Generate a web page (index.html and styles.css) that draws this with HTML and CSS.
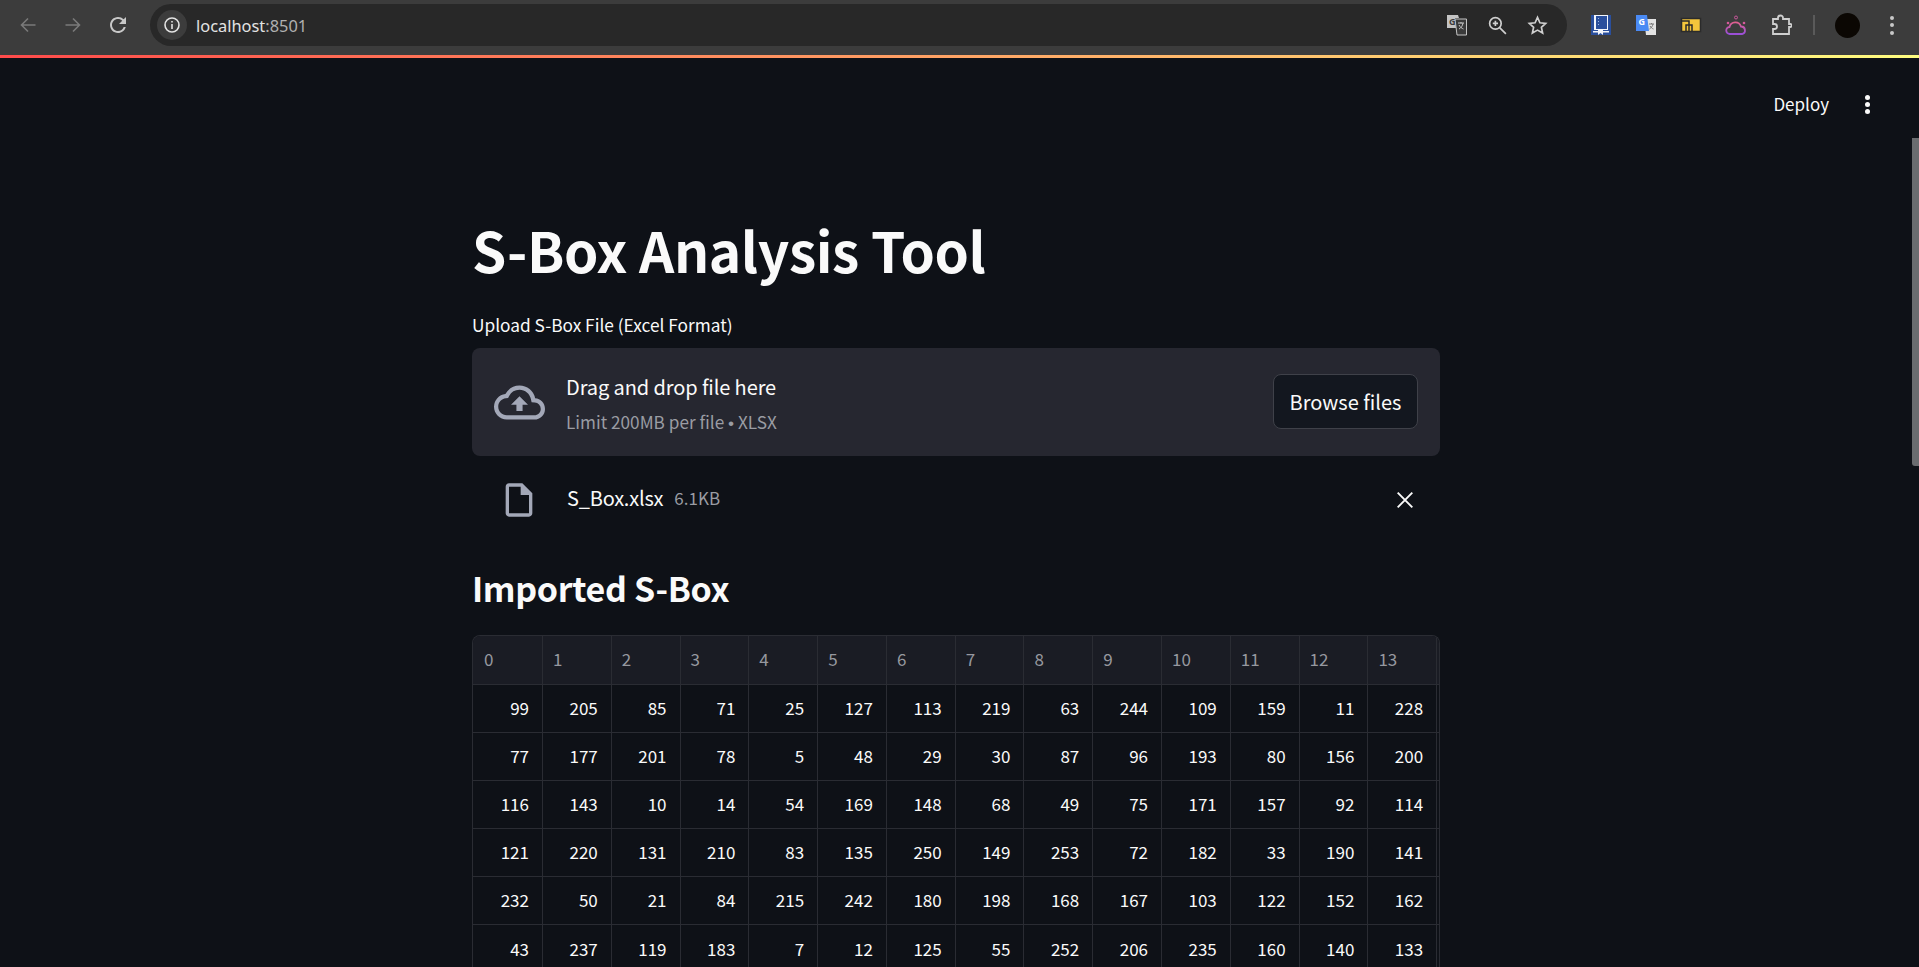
FILE: index.html
```html
<!DOCTYPE html>
<html>
<head>
    <meta charset="utf-8">
    <title>S-Box Analysis Tool</title>
    <link rel="stylesheet" href="styles.css">
</head>
<body>
    <div class="chrome">
        <div class="nav">
            <svg class="nav-icon dim" viewBox="0 0 18 18"><path d="M16.500 9H2.500M9 2.500 2.500 9 9 15.500"/></svg>
            <svg class="nav-icon dim" viewBox="0 0 18 18"><path d="M1.500 9h14M9 2.500 15.500 9 9 15.500"/></svg>
            <svg class="nav-icon solid-icon" viewBox="3 3 18 18"><path d="M17.650 6.350A7.958 7.958 0 0 0 12 4c-4.420 0-7.990 3.580-7.990 8s3.570 8 7.990 8c3.730 0 6.840-2.550 7.730-6h-2.080A5.990 5.990 0 0 1 12 18c-3.310 0-6-2.690-6-6s2.690-6 6-6c1.660 0 3.140.69 4.220 1.780L13 11h7V4l-2.350 2.350z"/></svg>
        </div>
        <div class="omnibox">
            <span class="info-wrap">
                <svg class="info" viewBox="0 0 18 18"><circle cx="9" cy="9" r="7"/><path d="M9 8v5"/><path d="M9 5v1.600"/></svg>
            </span>
            <span class="url">localhost<span class="port">:8501</span></span>
            <span class="omni-right">
                <svg class="omni-icon" viewBox="0 0 22 22"><path class="solid" d="M1 1h11l1 3h-4l1 10H1z"/><path class="sheet" d="M9 5h11.500v16H11z"/><text x="3" y="10.500" class="g">G</text><path class="mark" d="M12 9h6M15 8v1.500M17 9c-.5 3-2 5-4 6M13 11c1 2 3 3.500 4.500 4"/></svg>
                <svg class="omni-icon line" viewBox="0 0 20 20"><circle cx="8" cy="8" r="5.500"/><path d="M12 12l6 6M8 5.500v5M5.500 8h5"/></svg>
                <svg class="omni-icon line" viewBox="0 0 20 20"><path d="M10 2.300l2.300 5.100 5.500.6-4.100 3.700 1.200 5.500L10 14.400l-4.900 2.800 1.200-5.500L2.200 8l5.500-.6z"/></svg>
            </span>
        </div>
        <div class="extensions">
            <svg class="ext" viewBox="0 0 22 22"><path fill="#2a4f9c" d="M1 1h20v20H1z"/><path fill="#f3f6fb" d="M4 1h14v15H4z"/><path fill="#2a4f9c" d="M6 2h11v13H6z"/><path fill="#9db9e6" d="M8 4h1v1H8zM8 7h1v1H8zM8 10h1v1H8z"/><path fill="#f3f6fb" d="M3 17h16v1.500H3zM8 16h5v5l-2.500-2L8 21z"/></svg>
            <svg class="ext" viewBox="0 0 22 22"><path fill="#e3e3e3" d="M9 5h12v16H11z"/><path fill="#4a8af4" d="M1 1h11l2 16H1z"/><text x="3.500" y="11" class="g light">G</text><path fill="none" stroke="#777" stroke-width="1" d="M14 10h5M16.500 9v1M18 10c-.5 2.500-2 4-3.500 5M15 12c1 1.500 2 2.500 3.500 3"/></svg>
            <svg class="ext" viewBox="0 0 22 22"><path fill="#f5c63c" stroke="#2b2b2b" stroke-width="1.500" d="M1.500 4.500h19v13h-19z"/><path fill="none" stroke="#2b2b2b" stroke-width="1.500" d="M2 7h7v10M12 17v-6h-6v6"/></svg>
            <svg class="ext" viewBox="0 0 22 22"><defs><linearGradient id="cloud-grad" x1="0" y1="0" x2="0" y2="1"><stop offset="0" stop-color="#e0608f"/><stop offset="1" stop-color="#9a4fd8"/></linearGradient></defs><path fill="none" stroke="url(#cloud-grad)" stroke-width="1.800" d="M5 20a3.500 3.500 0 0 1-.5-7 6 6 0 0 1 11.500-.5 3.800 3.800 0 0 1 1 7.500z"/><circle cx="11" cy="3.500" r="1.500" fill="none" stroke="#c8579b"/><circle cx="3" cy="9" r="1.300" fill="#d65a9b"/><circle cx="19" cy="9" r="1.300" fill="#d65a9b"/></svg>
            <svg class="ext puzzle" viewBox="0 0 22 22"><path d="M3 5h5V4a2.500 2.500 0 0 1 5 0v1h6v5h1.200a1.500 1.500 0 0 1 0 3H19v7H3v-5h1.500a2.500 2.500 0 0 0 0-5H3z"/></svg>
            <span class="divider"></span>
            <span class="avatar"></span>
            <span class="chrome-dots"><i></i><i></i><i></i></span>
        </div>
    </div>
    <div class="decoration"></div>

    <div class="app">
        <div class="toolbar">
            <span class="deploy">Deploy</span>
            <span class="app-dots"><i></i><i></i><i></i></span>
        </div>

        <div class="main">
            <h1>S-Box Analysis Tool</h1>
            <div class="upload-label">Upload S-Box File (Excel Format)</div>

            <div class="dropzone">
                <svg class="cloud" viewBox="0 0 24 24"><path d="M19.35 10.040A7.490 7.490 0 0 0 12 4C9.110 4 6.600 5.640 5.350 8.040A5.994 5.994 0 0 0 0 14c0 3.310 2.690 6 6 6h13c2.760 0 5-2.240 5-5 0-2.640-2.050-4.780-4.650-4.960zM19 18H6c-2.210 0-4-1.790-4-4 0-2.050 1.530-3.760 3.560-3.970l1.070-.11.500-.95A5.469 5.469 0 0 1 12 6c2.620 0 4.880 1.860 5.390 4.430l.3 1.500 1.530.11A2.980 2.980 0 0 1 22 15c0 1.650-1.350 3-3 3zM8 13h2.550v3h2.900v-3H16l-4-4z"/></svg>
                <div class="drop-text">
                    <div class="drop-title">Drag and drop file here</div>
                    <div class="drop-limit">Limit 200MB per file <span class="bullet">•</span> XLSX</div>
                </div>
                <button class="browse">Browse files</button>
            </div>

            <div class="file-row">
                <svg class="file-icon" viewBox="0 0 24 24"><path d="M14 2H6c-1.100 0-1.990.9-1.990 2L4 20c0 1.100.89 2 1.990 2H18c1.100 0 2-.9 2-2V8l-6-6zM6 20V4h7v5h5v11H6z"/></svg>
                <span class="file-name">S_Box.xlsx</span>
                <span class="file-size">6.1KB</span>
                <svg class="file-close" viewBox="0 0 16 16"><path d="M1.500 1.500l13 13M14.500 1.500l-13 13"/></svg>
            </div>

            <h2>Imported S-Box</h2>

            <div class="grid-wrap">
                <table class="grid">
                    <thead>
                        <tr><th>0</th><th>1</th><th>2</th><th>3</th><th>4</th><th>5</th><th>6</th><th>7</th><th>8</th><th>9</th><th>10</th><th>11</th><th>12</th><th>13</th><th></th></tr>
                    </thead>
                    <tbody>
                        <tr><td>99</td><td>205</td><td>85</td><td>71</td><td>25</td><td>127</td><td>113</td><td>219</td><td>63</td><td>244</td><td>109</td><td>159</td><td>11</td><td>228</td><td></td></tr>
                        <tr><td>77</td><td>177</td><td>201</td><td>78</td><td>5</td><td>48</td><td>29</td><td>30</td><td>87</td><td>96</td><td>193</td><td>80</td><td>156</td><td>200</td><td></td></tr>
                        <tr><td>116</td><td>143</td><td>10</td><td>14</td><td>54</td><td>169</td><td>148</td><td>68</td><td>49</td><td>75</td><td>171</td><td>157</td><td>92</td><td>114</td><td></td></tr>
                        <tr><td>121</td><td>220</td><td>131</td><td>210</td><td>83</td><td>135</td><td>250</td><td>149</td><td>253</td><td>72</td><td>182</td><td>33</td><td>190</td><td>141</td><td></td></tr>
                        <tr><td>232</td><td>50</td><td>21</td><td>84</td><td>215</td><td>242</td><td>180</td><td>198</td><td>168</td><td>167</td><td>103</td><td>122</td><td>152</td><td>162</td><td></td></tr>
                        <tr><td>43</td><td>237</td><td>119</td><td>183</td><td>7</td><td>12</td><td>125</td><td>55</td><td>252</td><td>206</td><td>235</td><td>160</td><td>140</td><td>133</td><td></td></tr>
                    </tbody>
                </table>
            </div>
        </div>
        <div class="scroll-thumb"></div>
    </div>
</body>
</html>
```

FILE: styles.css
```css
html, body
{
	margin: 0;
	height: 100%;
	overflow: hidden;
}

body
{
	background-color: #0e1117;
	color: #fafafa;
	font-family: "Noto Sans CJK SC", "Noto Sans", sans-serif;
	display: flex;
	flex-direction: column;
}

/* browser bar */

.chrome
{
	height: 55px;
	flex: none;
	background-color: #3c3c3c;
	display: flex;
	align-items: center;
	padding-bottom: 5px;
	box-sizing: border-box;
	font-family: "Noto Sans", sans-serif;
}

.nav
{
	display: flex;
	gap: 27px;
	padding-left: 19px;
	width: 150px;
	box-sizing: border-box;
}

.nav-icon
{
	width: 18px;
	height: 18px;
	fill: none;
	stroke: #c8c8c8;
	stroke-width: 1.6;
}

.nav-icon.dim
{
	stroke: #7a7a7a;
}

.nav-icon.solid-icon
{
	fill: #c8c8c8;
	stroke: none;
}

.omnibox
{
	width: 1417px;
	height: 42px;
	background-color: #282828;
	border-radius: 21px;
	display: flex;
	align-items: center;
	padding: 0 19px 0 7px;
	box-sizing: border-box;
}

.info-wrap
{
	width: 30px;
	height: 30px;
	border-radius: 50%;
	background-color: #3c3c3c;
	display: flex;
	align-items: center;
	justify-content: center;
}

.info
{
	width: 18px;
	height: 18px;
	fill: none;
	stroke: #e3e3e3;
	stroke-width: 1.6;
}

.url
{
	font-size: 16.400px;
	color: #e3e3e3;
	margin-left: 9px;
}

.port
{
	color: #b0b0b0;
}

.omni-right
{
	margin-left: auto;
	display: flex;
	align-items: center;
	gap: 19px;
}

.omni-icon
{
	width: 22px;
	height: 22px;
}

.omni-icon.line
{
	fill: none;
	stroke: #cfcfcf;
	stroke-width: 1.6;
	width: 21px;
	height: 21px;
}

.omni-icon .solid
{
	fill: #c4c4c4;
}

.omni-icon .sheet
{
	fill: #3a3a3a;
	stroke: #c4c4c4;
}

.omni-icon .mark
{
	fill: none;
	stroke: #c4c4c4;
}

.g
{
	font-size: 9px;
	font-weight: 700;
	fill: #3a3a3a;
}

.g.light
{
	fill: #fff;
}

.extensions
{
	display: flex;
	align-items: center;
	gap: 23px;
	padding-left: 23px;
}

.ext
{
	width: 22px;
	height: 22px;
}

.puzzle
{
	fill: none;
	stroke: #cfcfcf;
	stroke-width: 1.8;
}

.divider
{
	width: 2px;
	height: 20px;
	background-color: #5a5a5a;
	margin-left: -2px;
}

.avatar
{
	width: 25px;
	height: 25px;
	border-radius: 50%;
	background-color: #0b0703;
	margin-left: -3px;
}

.chrome-dots, .app-dots
{
	display: flex;
	flex-direction: column;
	align-items: center;
}

.chrome-dots
{
	gap: 3.500px;
	margin-left: 7px;
}

.chrome-dots i
{
	width: 4px;
	height: 4px;
	border-radius: 50%;
	background-color: #c8c8c8;
}

.decoration
{
	height: 3px;
	flex: none;
	background-image: linear-gradient(90deg, #ff4b4b, #fffd80);
}

/* streamlit app */

.app
{
	flex: 1;
	min-height: 0;
	position: relative;
	overflow: hidden;
}

.toolbar
{
	display: flex;
	justify-content: flex-end;
	align-items: center;
	height: 92px;
	padding-right: 49px;
	gap: 36px;
}

.deploy
{
	font-size: 17px;
	margin-bottom: 2px;
}

.app-dots
{
	gap: 2px;
}

.app-dots i
{
	width: 5px;
	height: 5px;
	border-radius: 50%;
	background-color: #fafafa;
}

.main
{
	width: 968px;
	margin-left: 472px;
}

h1
{
	margin: 0;
	padding-top: 57px;
	font-size: 55px;
	line-height: 84px;
	letter-spacing: -0.4px;
	font-weight: 700;
}

.upload-label
{
	font-size: 17.300px;
	line-height: 22px;
	margin-top: 23px;
}

.dropzone
{
	height: 108px;
	margin-top: 12px;
	background-color: #262730;
	border-radius: 8px;
	display: flex;
	align-items: center;
	padding: 0 22px;
	box-sizing: border-box;
}

.cloud
{
	width: 51px;
	height: 51px;
	fill: #a3a8b8;
}

.drop-text
{
	margin-left: 21px;
	margin-top: 3px;
}

.drop-title
{
	font-size: 20px;
	line-height: 30px;
	letter-spacing: -0.1px;
}

.drop-limit
{
	font-size: 17.200px;
	line-height: 24px;
	margin-top: 8px;
	color: #9a9ca3;
}

.bullet
{
	font-family: "Liberation Sans", sans-serif;
}

.browse
{
	margin-left: auto;
	margin-bottom: 2px;
	width: 145px;
	height: 55px;
	background-color: #13171f;
	color: #fafafa;
	border: 1px solid #3f4149;
	border-radius: 8px;
	font-family: inherit;
	font-size: 20px;
}

.file-row
{
	display: flex;
	align-items: center;
	height: 62px;
	margin-top: 13px;
}

.file-icon
{
	width: 40px;
	height: 40px;
	fill: #a3a8b8;
	margin-left: 27px;
}

.file-name
{
	font-size: 20px;
	margin-left: 28px;
	margin-bottom: 6px;
	letter-spacing: -0.2px;
}

.file-size
{
	font-size: 17px;
	color: #9a9ca3;
	margin-left: 11px;
	margin-bottom: 6px;
}

.file-close
{
	width: 18px;
	height: 18px;
	margin-left: auto;
	margin-right: 26px;
	fill: none;
	stroke: #fafafa;
	stroke-width: 1.7;
}

h2
{
	margin: 0;
	padding-top: 32px;
	font-size: 34px;
	line-height: 50px;
	letter-spacing: -0.35px;
	font-weight: 700;
}

.grid-wrap
{
	margin-top: 22px;
	border: 1px solid #2a2c33;
	border-bottom: 0;
	border-radius: 8px 8px 0 0;
	overflow: hidden;
}

.grid
{
	border-collapse: collapse;
	table-layout: fixed;
	width: 1033.100px;
}

.grid th, .grid td
{
	font-size: 17px;
	font-weight: 400;
	padding: 0 13px 2px;
	height: 48.200px;
	box-sizing: border-box;
	border-right: 1px solid #2a2c33;
	border-bottom: 1px solid #2a2c33;
	overflow: hidden;
}

.grid th
{
	height: 48px;
	background-color: #1a1c24;
	color: #96989f;
	text-align: left;
	padding-left: 10px;
}

.grid th:first-child
{
	width: 69.500px;
	padding-left: 11px;
}

.grid td
{
	text-align: right;
}

.scroll-thumb
{
	position: absolute;
	right: 0;
	top: 80px;
	width: 7px;
	height: 328px;
	background-color: #6a6c6f;
	border-bottom-left-radius: 3px;
}
```
